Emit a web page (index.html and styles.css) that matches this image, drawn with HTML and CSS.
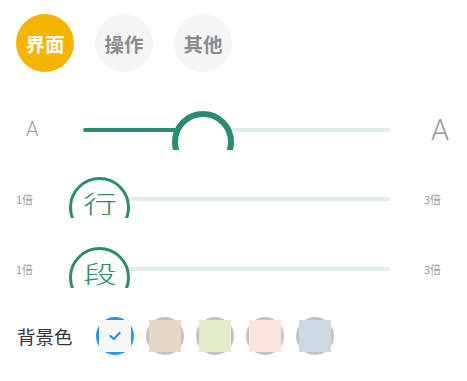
FILE: index.html
```html
<!DOCTYPE html>
<html>
<head>
<meta charset="utf-8">
<link rel="stylesheet" href="styles.css">
</head>
<body>
<div class="page">
  <div class="tabs">
    <div class="tab active">界面</div>
    <div class="tab">操作</div>
    <div class="tab">其他</div>
  </div>

  <div class="row size-row">
    <div class="a-small">A</div>
    <div class="slider s1">
      <div class="track"></div>
      <div class="track-active" style="width:95px"></div>
      <div class="thumb big"></div>
    </div>
    <div class="a-big">A</div>
  </div>

  <div class="row mult-row">
    <div class="mult-left">1倍</div>
    <div class="slider s2">
      <div class="track"></div>
      <div class="thumb small"><span class="thumb-txt">行</span></div>
    </div>
    <div class="mult-right">3倍</div>
  </div>

  <div class="row mult-row r3">
    <div class="mult-left">1倍</div>
    <div class="slider s2">
      <div class="track"></div>
      <div class="thumb small"><span class="thumb-txt">段</span></div>
    </div>
    <div class="mult-right">3倍</div>
  </div>

  <div class="bg-row">
    <div class="bg-label">背景色</div>
    <div class="swatches">
      <div class="swatch selected"><div class="sq c0">
        <svg width="12" height="10" viewBox="0 0 12 10"><polyline points="1.5,5 4.8,8 10.5,2" fill="none" stroke="#2a8ef0" stroke-width="2.2" stroke-linecap="round" stroke-linejoin="round"/></svg>
      </div></div>
      <div class="swatch"><div class="sq c1"></div></div>
      <div class="swatch"><div class="sq c2"></div></div>
      <div class="swatch"><div class="sq c3"></div></div>
      <div class="swatch"><div class="sq c4"></div></div>
    </div>
  </div>
</div>
</body>
</html>
```

FILE: styles.css
```css
* { box-sizing: border-box; }
html, body { margin: 0; padding: 0; background: #fff; }
body {
  font-family: "Noto Sans CJK SC", "Noto Sans", Roboto, sans-serif;
  width: 467px;
  height: 381px;
  overflow: hidden;
}
.page { display: flex; flex-direction: column; }

.tabs {
  display: flex;
  gap: 21px;
  padding: 14px 0 0 16px;
}
.tab {
  width: 58px;
  height: 58px;
  border-radius: 50%;
  background: #f5f5f5;
  color: #8c8c8c;
  font-size: 19.5px;
  font-weight: 700;
  display: flex;
  align-items: center;
  justify-content: center;
}
.tab.active { background: #f4b400; color: #fff; }

.row {
  display: flex;
  overflow: hidden;
  position: relative;
}
.size-row {
  margin-top: 28px;
  height: 50px;
}
.a-small {
  width: 83px;
  padding-left: 26px;
  font-family: Roboto, "Liberation Sans", sans-serif;
  font-weight: 300;
  font-size: 20px;
  color: #999;
  line-height: 20px;
  padding-top: 19px;
}
.a-big {
  padding-left: 41px;
  font-family: Roboto, "Liberation Sans", sans-serif;
  font-weight: 300;
  font-size: 29px;
  color: #999;
  line-height: 29px;
  padding-top: 16px;
}
.slider { position: relative; }
.s1 { width: 307px; }
.track {
  position: absolute;
  left: 0; right: 0;
  height: 4px;
  border-radius: 2px;
  background: #e2edeb;
}
.s1 .track { top: 28px; }
.track-active {
  position: absolute;
  left: 0;
  top: 28px;
  height: 4px;
  border-radius: 2px;
  background: #2e8a73;
}
.thumb {
  position: absolute;
  border-radius: 50%;
  background: #fff;
  border: 6px solid #2e8a73;
}
.thumb.big {
  left: 89px;
  top: 11px;
  width: 62px;
  height: 62px;
}

.mult-row { margin-top: 20px; height: 48px; }
.mult-row.r3 { margin-top: 22px; }
.mult-left, .mult-right {
  font-size: 11px;
  color: #9a9a9a;
  line-height: 12px;
  padding-top: 23px;
}
.mult-left { width: 69px; padding-left: 16px; }
.mult-right { padding-left: 34px; }
.s2 { width: 321px; }
.s2 .track { top: 27px; left: 30px; }
.thumb.small {
  left: 0;
  top: 7px;
  width: 61px;
  height: 61px;
  border-width: 3px;
  display: flex;
  justify-content: center;
}
.thumb-txt {
  display: block;
  color: #2e8a73;
  font-size: 24px;
  font-weight: 300;
  line-height: 24px;
  margin-top: 11px;
  transform: scaleX(1.4);
}

.bg-row {
  display: flex;
  align-items: center;
  margin-top: 29px;
  padding-left: 17px;
  height: 38px;
}
.bg-label {
  font-size: 18.5px;
  color: #333;
  width: 79px;
}
.swatches { display: flex; gap: 12px; }
.swatch {
  width: 38px;
  height: 38px;
  border-radius: 50%;
  background: #c2c2c2;
  display: flex;
  align-items: center;
  justify-content: center;
}
.swatch.selected { background: #2196f3; }
.sq {
  width: 32px;
  height: 32px;
  display: flex;
  align-items: center;
  justify-content: center;
}
.c0 { background: #f7f7f7; }
.c1 { background: #e6d7c6; }
.c2 { background: #e2edcb; }
.c3 { background: #fde4dc; }
.c4 { background: #cddae4; }
```
